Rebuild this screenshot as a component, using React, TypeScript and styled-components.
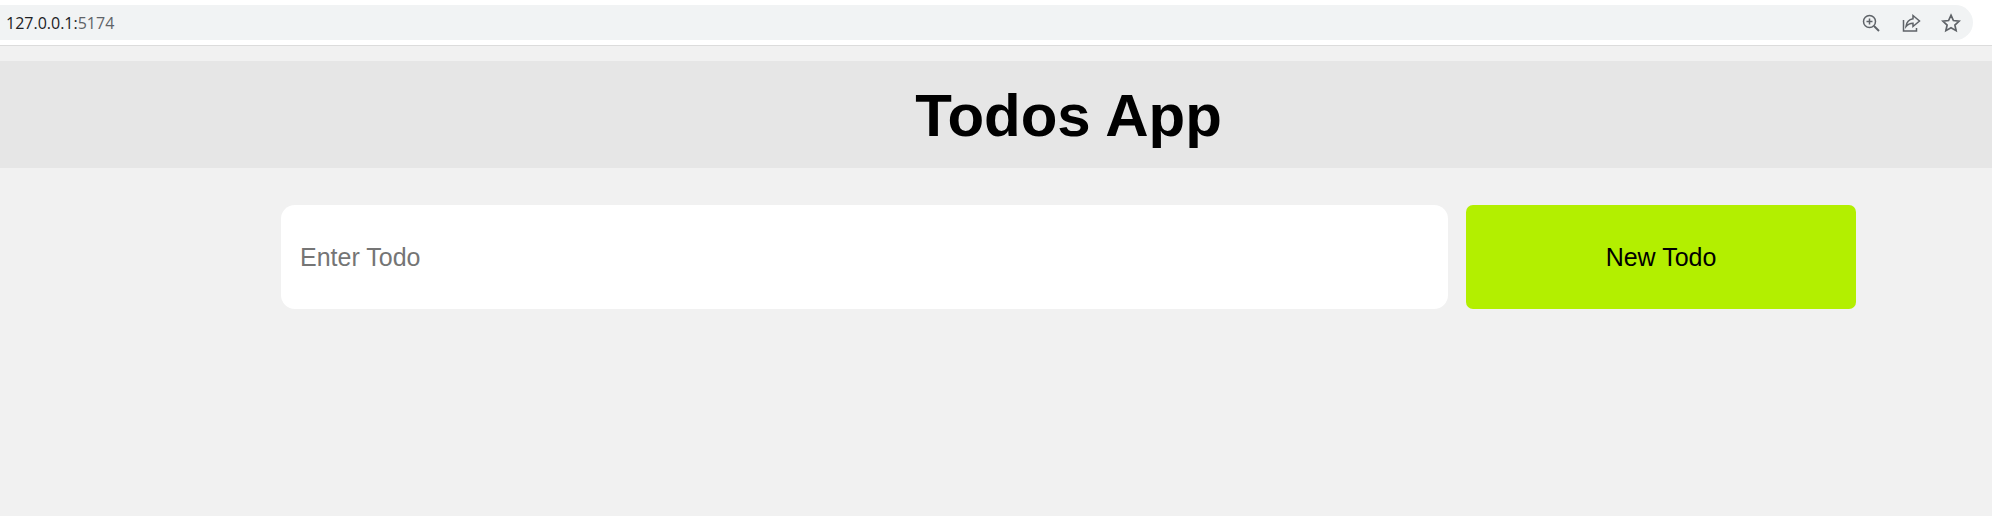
import React from "react";
import styled, { createGlobalStyle } from "styled-components";

const Global = createGlobalStyle`
  html, body { margin: 0; padding: 0; background: #f1f1f1; }
  body { font-family: "Liberation Sans", Arial, sans-serif; overflow: hidden; }
`;

const Page = styled.div`
  width: 1992px;
  height: 516px;
  display: flex;
  flex-direction: column;
  background: #f1f1f1;
  overflow: hidden;
`;

const BrowserBar = styled.div`
  height: 45px;
  box-sizing: border-box;
  padding: 5px 19px 5px 0;
  background: #ffffff;
  flex: none;
`;

const Divider = styled.div`
  height: 1px;
  background: #dcdcdc;
  flex: none;
`;

const Omnibox = styled.div`
  height: 35px;
  display: flex;
  align-items: center;
  justify-content: space-between;
  padding: 0 12px 0 6px;
  background: #f1f3f4;
  border-radius: 0 18px 18px 0;
`;

const Url = styled.span`
  font-family: "Open Sans", "Noto Sans", sans-serif;
  font-size: 16px;
  color: #202124;
`;

const UrlPort = styled.span`
  color: #5f6368;
`;

const BarIcons = styled.div`
  display: flex;
  align-items: center;
  gap: 20px;
`;

const BarIcon = styled.svg`
  width: 20px;
  height: 20px;
  fill: none;
  stroke: #5f6368;
  stroke-width: 1.5;
  display: block;
`;

const Header = styled.header`
  margin-top: 15px;
  height: 107px;
  flex: none;
  display: flex;
  align-items: center;
  justify-content: center;
  padding: 3px 0 0 145px;
  box-sizing: border-box;
  background: #e6e6e6;
`;

const Title = styled.h1`
  margin: 0;
  font-size: 60px;
  line-height: 1;
  font-weight: 700;
  color: #000000;
`;

const Form = styled.form`
  margin: 37px 0 0 281px;
  width: 1575px;
  height: 104px;
  display: flex;
  gap: 18px;
`;

const TodoInput = styled.input`
  flex: 1;
  min-width: 0;
  box-sizing: border-box;
  padding: 0 19px;
  border: 0;
  outline: 0;
  border-radius: 14px;
  background: #ffffff;
  font-family: inherit;
  font-size: 25px;
  color: #000000;
  &::placeholder { color: #757575; opacity: 1; }
`;

const NewButton = styled.button`
  width: 390px;
  flex: none;
  border: 0;
  border-radius: 7px;
  background: #b3ef00;
  color: #000000;
  font-family: inherit;
  font-size: 25px;
  cursor: pointer;
`;

export default function App() {
  return (
    <Page>
      <Global />
      <BrowserBar>
        <Omnibox>
          <Url>127.0.0.1:<UrlPort>5174</UrlPort></Url>
          <BarIcons>
            <BarIcon viewBox="0 0 20 20">
              <circle cx="8.5" cy="8.5" r="6" />
              <path d="M13 13l5 5" strokeWidth="2" />
              <path d="M8.5 5.5v6M5.5 8.5h6" />
            </BarIcon>
            <BarIcon viewBox="0 0 20 20">
              <path d="M2.5 7v11h13v-3" />
              <path d="M12 2.5l6.5 5.5-6.5 5.5v-3.3c-3 0-5.2 1-7 3.3 .5-4 3-7 7-7.7z" />
            </BarIcon>
            <BarIcon viewBox="0 0 20 20">
              <path d="M10 2.2l2.4 5.3 5.8.6-4.3 3.9 1.2 5.7-5.1-2.9-5.1 2.9 1.2-5.7-4.3-3.9 5.8-.6z" strokeWidth="1.7" />
            </BarIcon>
          </BarIcons>
        </Omnibox>
      </BrowserBar>
      <Divider />
      <Header>
        <Title>Todos App</Title>
      </Header>
      <Form onSubmit={(e) => e.preventDefault()}>
        <TodoInput placeholder="Enter Todo" />
        <NewButton type="submit">New Todo</NewButton>
      </Form>
    </Page>
  );
}
